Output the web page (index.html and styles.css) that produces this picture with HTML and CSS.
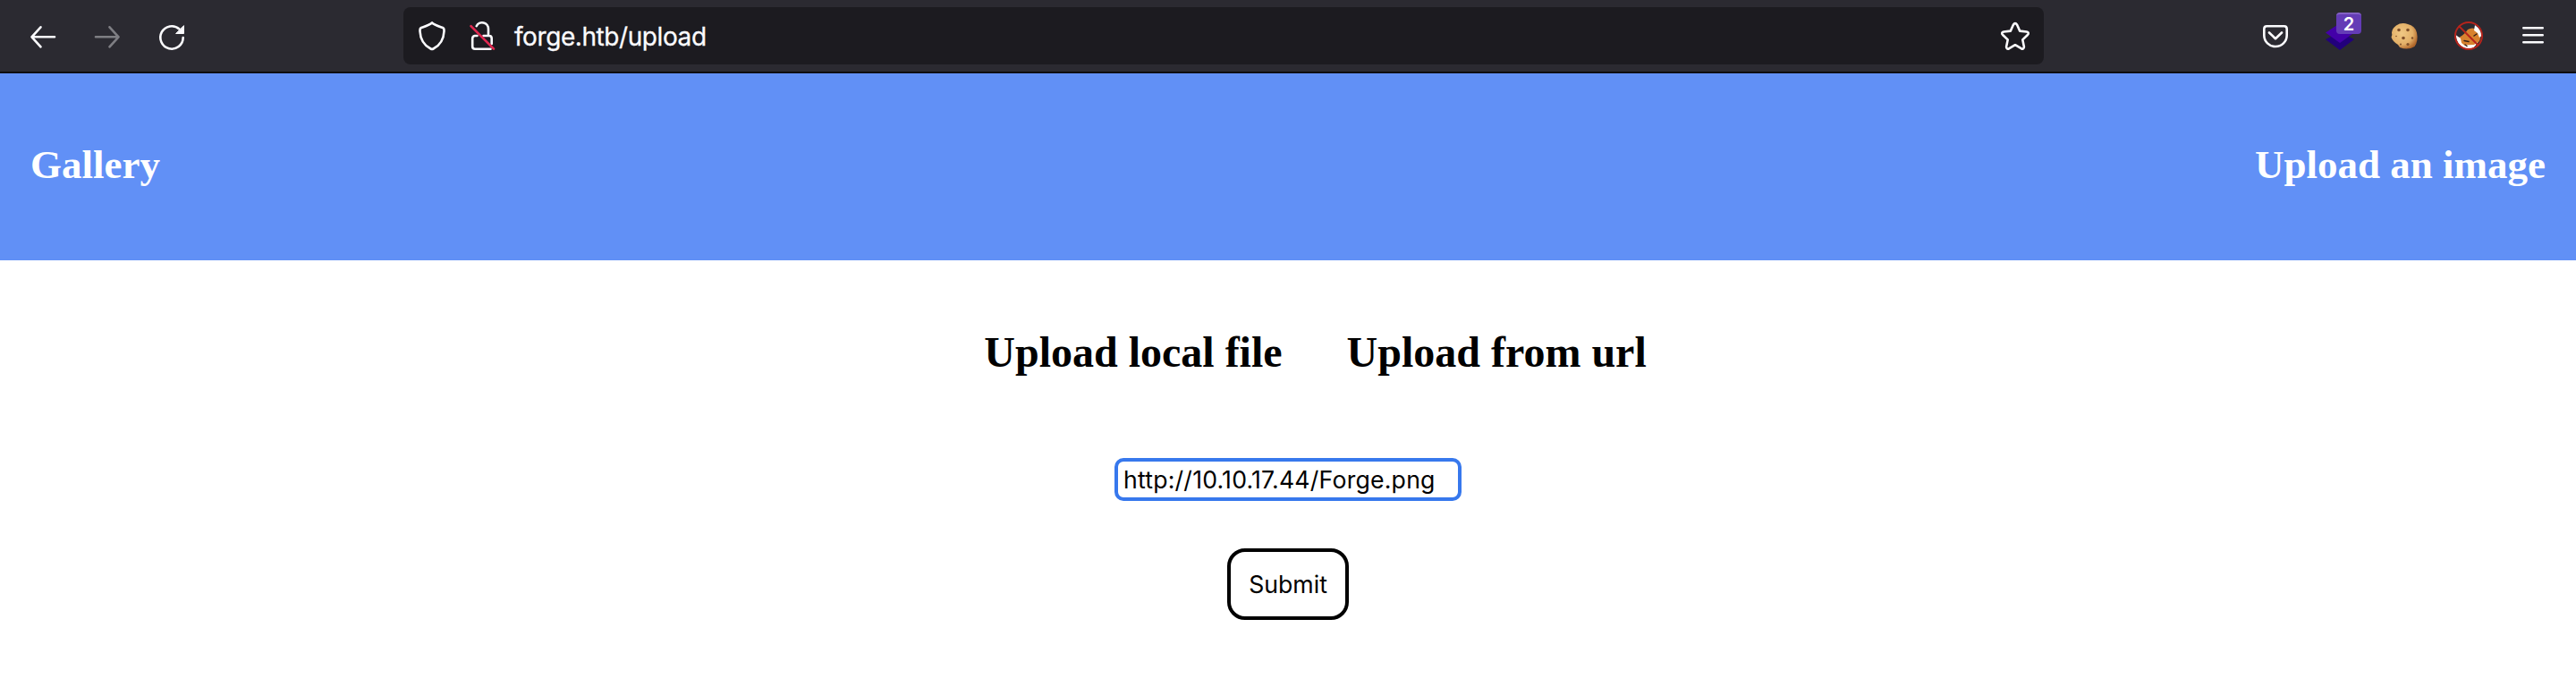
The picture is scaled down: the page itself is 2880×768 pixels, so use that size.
FILE: index.html
```html
<!DOCTYPE html>
<html lang="en">
<head>
<meta charset="utf-8">
<title>Upload an image</title>
<link rel="stylesheet" href="styles.css">
</head>
<body>
<div class="toolbar">
  <div class="nav">
    <svg class="icon" viewBox="0 0 48 48"><path d="M21.500 14.300 11.500 25.300 21.500 36.300M11.500 25.300H37"/></svg>
    <svg class="icon dim" viewBox="0 0 48 48"><path d="M26.500 14.300 36.500 25.300 26.500 36.300M36.500 25.300H11"/></svg>
    <svg class="icon" viewBox="0 0 48 48"><path d="M36.700 26A12.700 12.700 0 1 1 32.500 16.500"/><path class="fill" d="M37.500 13V21.500H29Z"/></svg>
  </div>
  <div class="urlbar">
    <svg class="icon shield" viewBox="0 0 48 48"><path d="M24 9.300C26 11.500 32 13.500 36 15C37.500 15.600 37.700 16.500 37.500 19C37 28 33.500 34.500 25.500 38.500Q24 39.300 22.500 38.500C14.500 34.500 11 28 10.500 19C10.300 16.500 10.500 15.600 12 15C16 13.500 22 11.500 24 9.300Z"/></svg>
    <svg class="icon lock" viewBox="0 0 48 48"><path d="M17.700 13.200A7 7 0 0 1 31 16.500V24M25.500 24H32Q34.700 24 34.700 27V33M15.800 24Q13.200 24.500 13.200 27V36Q13.200 38.700 16 38.700H33.500M15.800 24H18.500"/><path class="strike" d="M11.500 13.200 37 38.700"/></svg>
    <span class="address">forge.htb/upload</span>
    <svg class="icon star" viewBox="0 0 48 48"><path d="M21.900 11.700Q24 8.500 26.100 11.700L29.200 18.600L36.800 19.500Q40.200 20.400 37.900 23L32.300 28.400L33.900 36.200Q33.800 39.600 30.700 38.200L24 34.200L17.300 38.200Q14.200 39.600 14.100 36.200L15.700 28.400L10.100 23Q7.800 20.400 11.200 19.500L18.800 18.600Z"/></svg>
  </div>
  <div class="extensions">
    <svg class="icon" viewBox="0 0 48 48"><path d="M14.300 13.300H33.700Q36.700 13.300 36.700 16.300V23.500A12.700 12.500 0 0 1 11.300 23.500V16.300Q11.300 13.300 14.300 13.300ZM17 20.500 24 27.200 31 20.500"/></svg>
    <div class="badged">
      <svg class="icon solid" viewBox="0 0 48 48"><path fill="#22007c" d="M24 20 40 28 24 40 8 28Z"/><path fill="#4300a8" d="M24 10 40 20.500 24 32 8 20.500Z"/></svg>
      <span class="badge">2</span>
    </div>
    <svg class="icon solid" viewBox="0 0 48 48"><defs><radialGradient id="cookie" cx=".4" cy=".4" r=".65"><stop offset="0" stop-color="#f0c884"/><stop offset=".65" stop-color="#e3b068"/><stop offset="1" stop-color="#b0662a"/></radialGradient></defs><g transform="translate(0 -1.500)"><path fill="url(#cookie)" d="M15 14Q21 10 28 12.500Q36 14 38 22Q40 31 35.500 37.500Q28 42 19 38.500L17 35.500Q11 32 9.500 27Q11 25 10 22Q10.500 17 15 14Z"/><g fill="#80502a"><circle cx="18" cy="19" r="1.800"/><circle cx="28" cy="19" r="1.800"/><circle cx="23" cy="28" r="1.800"/><circle cx="33" cy="28" r="1.200"/><circle cx="15" cy="26" r=".8"/><circle cx="28" cy="35" r="1.600"/><circle cx="20" cy="35" r="1"/></g></g></svg>
    <svg class="icon solid" viewBox="0 0 48 48"><path fill="#d8822f" d="M13 26Q19 23 23 17Q28 14 33 17L37 24Q38 29 33 33L25 37Q16 38 13 26Z"/><path fill="#fff" d="M9.500 23 15 27 16 32 19 34.500 30 34 34 31Q31 38.500 24 39Q11 37 9.500 23ZM31 12Q38 17 38.500 24L36 26 34 21 30 18Z"/><path stroke="#33211a" stroke-width="1.500" d="m19 29.500 5 1M30 24l3-2M20 34l2 1.500"/><g fill="none" stroke="#b6241c" stroke-width="2"><circle cx="24" cy="24" r="15"/><path d="M13.500 13.500 34.500 34.500"/></g></svg>
    <svg class="icon" viewBox="0 0 48 48"><path d="M13.300 15.300H34.700M13.300 23.300H34.700M13.300 31.300H34.700"/></svg>
  </div>
</div>
<header class="site-header">
  <a class="site-link">Gallery</a>
  <a class="site-link">Upload an image</a>
</header>
<main class="content">
  <div class="tabs"><span class="tab">Upload local file</span><span class="tab">Upload from url</span></div>
  <form class="upload">
    <input class="url-field" type="text" value="http://10.10.17.44/Forge.png" aria-label="Image url">
    <button class="submit" type="button">Submit</button>
  </form>
</main>
</body>
</html>
```
FILE: styles.css
```css
* { box-sizing: border-box; }
body {
  margin: 0;
  height: 768px;
  overflow: hidden;
  background: #fff;
  font-family: "Liberation Serif", serif;
}
.toolbar {
  display: flex;
  align-items: center;
  justify-content: space-between;
  height: 82px;
  padding: 0 24px;
  border-bottom: 2px solid #0e0e12;
  background: #2b2a31;
  font-family: Inter, sans-serif;
}
.nav, .extensions { display: flex; gap: 24px; }
.nav { width: 427px; }
.extensions { width: 336px; }
.icon {
  display: block;
  flex: none;
  width: 48px;
  height: 48px;
  fill: none;
  stroke: #fbfbfe;
  stroke-width: 2.6;
  stroke-linecap: round;
  stroke-linejoin: round;
}
.dim { opacity: .4; }
.icon .fill { fill: #fbfbfe; stroke-width: 1; }
.solid { stroke: none; }
.icon .strike { stroke: #e22850; }
.urlbar {
  display: flex;
  align-items: center;
  width: 1834px;
  height: 64px;
  margin-right: auto;
  padding: 0 8px;
  border-radius: 8px;
  background: #1c1b20;
}
.lock { margin-left: 8px; }
.address {
  margin-left: 12px;
  padding-top: 2px;
  color: #fbfbfe;
  font-size: 28px;
  line-height: 40px;
  letter-spacing: -.42px;
  -webkit-text-stroke: .3px #fbfbfe;
}
.star { margin-left: auto; }
.badged { position: relative; }
.badge {
  position: absolute;
  left: 20px;
  top: -2px;
  width: 28px;
  height: 24px;
  border-radius: 4px;
  border-top: 2px solid #8360c5;
  background: #643cb6;
  color: #fff;
  font-size: 20px;
  font-weight: 600;
  line-height: 22px;
  text-align: center;
}
.site-header {
  display: flex;
  justify-content: space-between;
  height: 209px;
  padding: 76px 34px 0;
  background: #6190f6;
}
.site-link {
  color: #fff;
  font-size: 45px;
  font-weight: bold;
  line-height: 52px;
}
.content { padding-top: 75px; }
.tabs {
  display: flex;
  justify-content: center;
  gap: 72px;
  padding-left: 61px;
}
.tab { font-size: 48px; font-weight: bold; line-height: 56px; }
.upload {
  display: flex;
  flex-direction: column;
  align-items: center;
  gap: 53px;
  padding-top: 90px;
}
.url-field, .submit {
  background: #fff;
  color: #000;
  font-family: Inter, sans-serif;
  font-size: 26.67px;
}
.url-field {
  width: 388px;
  height: 48px;
  padding: 0 6px;
  border: 4px solid #3778ed;
  border-radius: 10px;
  outline: none;
  letter-spacing: .2px;
}
.submit {
  width: 136px;
  height: 80px;
  padding: 0;
  border: 4px solid #000;
  border-radius: 20px;
}
```
